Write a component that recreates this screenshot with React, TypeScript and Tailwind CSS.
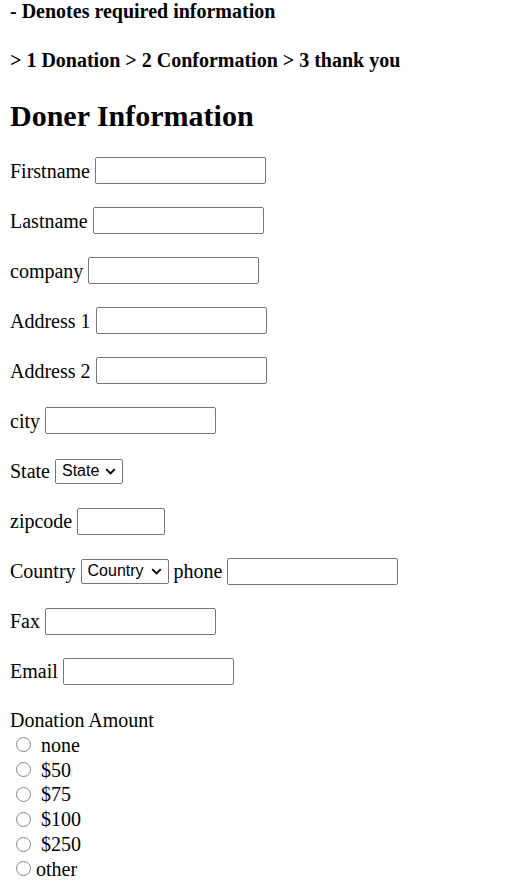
import React from "react";

function Input({ w = 171 }: { w?: number }) {
  return (
    <span
      className={`inline-block h-[27px] border border-[#767676] rounded-[2px] bg-white shrink-0 ${w === 88 ? "w-[88px]" : "w-[171px]"}`}
    />
  );
}

function Select({ label, wide }: { label: string; wide?: boolean }) {
  return (
    <span
      className={`inline-flex items-center h-[25px] border border-[#767676] rounded-[2px] bg-white pl-[6px] pr-[6px] justify-between shrink-0 text-[16px] leading-none ${wide ? "w-[88px]" : "w-[68px]"}`}
      style={{ fontFamily: "Arial, 'Liberation Sans', sans-serif" }}
    >
      <span>{label}</span>
      <svg width="11" height="7" viewBox="0 0 11 7" className="ml-[3px]">
        <path d="M1.2 1.2 L5.5 5.5 L9.8 1.2" fill="none" stroke="#000" strokeWidth="1.9" />
      </svg>
    </span>
  );
}

function Row({ children }: { children: React.ReactNode }) {
  return <div className="flex items-center h-[30px] gap-[5px] whitespace-nowrap">{children}</div>;
}

function Radio({ label, space = true }: { label: string; space?: boolean }) {
  return (
    <div className="flex items-center h-[24.8px]">
      <span className="ml-[6px] w-[15px] h-[15px] rounded-full border border-[#858585] bg-white shrink-0" />
      <span className={space ? "ml-[10px]" : "ml-[5px]"}>{label}</span>
    </div>
  );
}

export default function App() {
  return (
    <div
      className="w-[518px] h-[891px] bg-white text-black pl-[10px] text-[20px] overflow-hidden"
      style={{ fontFamily: "'Liberation Serif', 'Times New Roman', serif" }}
    >
      <div className="font-bold leading-[23px]">- Denotes required information</div>
      <div className="font-bold leading-[23px] mt-[26px]">&gt; 1 Donation &gt; 2 Conformation &gt; 3 thank you</div>
      <h1 className="font-bold text-[30px] leading-[35px] mt-[26px]">Doner Information</h1>
      <div className="flex flex-col gap-[20.1px] mt-[22.5px]">
        <Row>Firstname<Input /></Row>
        <Row>Lastname<Input /></Row>
        <Row>company<Input /></Row>
        <Row>Address 1<Input /></Row>
        <Row>Address 2<Input /></Row>
        <Row>city<Input /></Row>
        <Row>State<Select label="State" /></Row>
        <Row>zipcode<Input w={88} /></Row>
        <Row>Country<Select label="Country" wide />phone<Input /></Row>
        <Row>Fax<Input /></Row>
        <Row>Email<Input /></Row>
      </div>
      <div className="mt-[23px] leading-[23px]">Donation Amount</div>
      <div className="flex flex-col">
        <Radio label="none" />
        <Radio label="$50" />
        <Radio label="$75" />
        <Radio label="$100" />
        <Radio label="$250" />
        <Radio label="other" space={false} />
      </div>
    </div>
  );
}
